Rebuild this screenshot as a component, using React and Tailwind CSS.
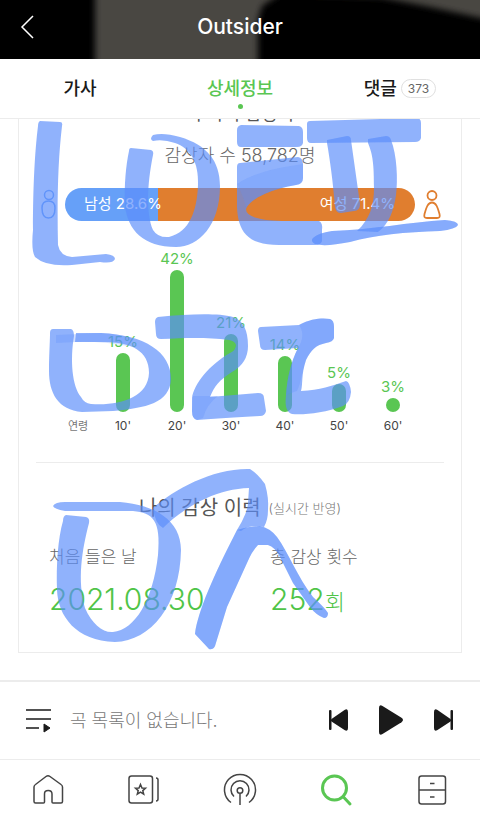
import React from "react";

const AGES = [
	{ age: "10'", percent: 15, height: 59 },
	{ age: "20'", percent: 42, height: 142 },
	{ age: "30'", percent: 21, height: 78 },
	{ age: "40'", percent: 14, height: 56 },
	{ age: "50'", percent: 5, height: 28 },
	{ age: "60'", percent: 3, height: 14 }
];

const Header = () =>
	<header className="relative flex h-[59px] items-center justify-between overflow-hidden bg-black px-5 pb-[5px]">
		<svg
			className="absolute inset-0 h-full w-full"
			viewBox="0 0 480 59"
			preserveAspectRatio="none"
			aria-hidden="true">
			<defs>
				<filter id="soft" x="-20%" y="-50%" width="140%" height="200%">
					<feGaussianBlur stdDeviation="3" />
				</filter>
			</defs>
			<g fill="#484742" filter="url(#soft)">
				<path d="M95 -20H300L262 6L258 20V80H95Z" />
				<path d="M300 -20H500V22L430 7L380 -3L300 -6Z" />
			</g>
		</svg>
		<button type="button" aria-label="뒤로" className="relative w-6 text-white">
			<svg width="14" height="24" viewBox="0 0 14 24" fill="none" stroke="currentColor" strokeWidth="1.5">
				<path d="M13 1L2 12L13 23" />
			</svg>
		</button>
		<h1 className="relative text-[21px] leading-7 font-medium text-white">Outsider</h1>
		<span className="w-6" />
	</header>;

const Tabs = () =>
	<nav className="flex h-[60px] border-b border-[#ececec] bg-white text-lg font-medium text-[#1a1a1a]">
		<a href="#lyrics" className="flex flex-1 items-center justify-center">
			가사
		</a>
		<a href="#detail" className="relative flex flex-1 items-center justify-center text-[#5ac653]">
			상세정보
			<span className="absolute bottom-[9px] h-[5px] w-[5px] rounded-full bg-[#5ac653]" />
		</a>
		<a href="#comments" className="flex flex-1 items-center justify-center gap-1">
			댓글
			<span className="rounded-full border border-[#e0e0e0] px-[6px] text-xs leading-[17px] font-normal text-[#666]">
				373
			</span>
		</a>
	</nav>;

const GenderRatio = () =>
	<div className="mt-[18px] flex items-center gap-2 px-5">
		<svg className="h-8 w-[18px] shrink-0" viewBox="0 0 18 32" fill="none" stroke="#6da2f8" strokeWidth="1.5">
			<circle cx="10" cy="6" r="4.5" />
			<path d="M9.500 12C5 12 3 15 3 19C3 25 5 29 9.500 29S16 25 16 19C16 15 14 12 9.500 12Z" />
		</svg>
		<div className="flex h-[33px] flex-1 overflow-hidden rounded-full text-[15px] text-white">
			<div className="flex w-[93px] items-center bg-[#66a0f8] pl-[19px] whitespace-nowrap">
				<span className="relative">남성 28.6%</span>
			</div>
			<div className="flex flex-1 items-center justify-end bg-[#e07e2f] pr-5">여성 71.4%</div>
		</div>
		<svg className="h-8 w-[18px] shrink-0" viewBox="0 0 18 32" fill="none" stroke="#e07e2f" strokeWidth="1.8">
			<circle cx="9" cy="6.500" r="4.500" />
			<path d="M9 13.500C5 13.500 3.500 18 1.500 25C.8 28 1.500 29 4 29H14C16.500 29 17.200 28 16.500 25C14.500 18 13 13.500 9 13.500Z" />
		</svg>
	</div>;

const AgeChart = () =>
	<div className="mt-[30px] flex items-end px-[41px]">
		<span className="w-9 text-center text-[11px] leading-5 text-[#777]">연령</span>
		{AGES.map(item =>
			<div key={item.age} className="flex flex-1 flex-col items-center">
				<span className="mb-[3px] text-[15px] leading-4 text-[#5ac653]">
					{item.percent}%
				</span>
				<span className="w-[14px] rounded-full bg-[#5ac653]" style={{ height: item.height }} />
				<span className="mt-1 text-xs leading-5 text-[#444]">
					{item.age}
				</span>
			</div>
		)}
	</div>;

const History = () =>
	<section className="mt-[26px]">
		<hr className="mx-[17px] border-[#ececec]" />
		<h2 className="mt-[31px] flex items-center justify-center gap-2 text-xl leading-7 font-normal text-[#555]">
			나의 감상 이력
			<small className="text-[13px] font-light text-[#777]">(실시간 반영)</small>
		</h2>
		<dl className="mt-[23px] grid grid-cols-2 text-[#666]">
			<div className="pl-[30px]">
				<dt className="text-[17px] leading-6 font-light">처음 들은 날</dt>
				<dd className="mt-3 text-[30px] leading-9 font-light text-[#4fc448]">2021.08.30</dd>
			</div>
			<div className="pl-[30px]">
				<dt className="text-[17px] leading-6 font-light">총 감상 횟수</dt>
				<dd className="mt-3 text-[30px] leading-9 font-light text-[#4fc448]">
					252<span className="text-[22px]">회</span>
				</dd>
			</div>
		</dl>
	</section>;

const Scribble = () =>
	<svg
		className="pointer-events-none absolute inset-0 h-full w-full"
		viewBox="0 119 480 561"
		aria-hidden="true">
		<defs>
			<filter id="edge" x="-5%" y="-5%" width="110%" height="110%" colorInterpolationFilters="sRGB">
				<feGaussianBlur stdDeviation="0.7" />
			</filter>
		</defs>
		<g fill="#5b8dfa" fillOpacity="0.68" filter="url(#edge)">
			<path d="M40 121L60 122Q63 122 62 126C58 160 57 200 58 245Q60 256 72 257L106 254Q115 255 115 259Q113 264 100 262L72 265Q46 267 35 257Q31 250 33 230C33 185 35 150 38 126Q38 122 40 121Z" />
			<path d="M131 148L151 150Q154 151 153 155C147 185 146 213 153 230Q158 238 169 237C190 232 197 210 198 185C199 162 190 148 175 143Q163 139 153 141Q149 139 153 135Q163 132 180 137C207 145 220 161 220 186C220 225 199 247 176 247C143 247 128 230 125 206C124 185 126 165 129 151Q129 148 131 148Z" />
			<path d="M241 125L299 126Q303 127 303 132V143Q302 147 297 147H241Q237 147 237 142V130Q237 126 241 125Z" />
			<path d="M240 163L298 157Q303 158 303 164V178Q303 184 296 185C275 188 250 198 246 209Q246 220 282 221L319 221Q323 223 322 230V241Q321 245 315 245H282C247 246 238 231 237 207V167Q237 163 240 163Z" />
			<path d="M237 184Q257 170 303 164V178Q303 184 296 185C275 188 250 198 246 209Q245 199 237 184Z" opacity=".35" />
			<path d="M310 121L416 118Q421 118 421 123V138Q420 142 415 142L311 143Q307 143 307 138V124Q307 121 310 121Z" />
			<path d="M327 140L347 136Q351 136 351 140L360 204Q360 211 354 211L341 213Q336 213 335 207C333 182 330 160 327 143Z" />
			<path d="M368 139L386 136Q390 136 391 140C397 155 398 180 396 195C394 210 389 224 378 232L357 231C370 219 374 205 374 188C374 165 373 155 368 143Z" />
			<path d="M313 238Q318 233 332 231C370 230 410 222 445 220Q458 221 458 225Q456 229 440 231C405 232 375 235 350 242Q325 247 315 244Q310 241 313 238Z" />
			<path d="M313 238Q318 233 332 231C370 230 410 222 445 220Q458 221 458 225Q456 229 440 231C405 232 375 235 350 242Q325 247 315 244Q310 241 313 238Z" opacity=".3" />
			<path d="M53 329L71 329Q74 330 74 336C70 360 72 386 81 397Q84 403 91 404C119 406 148 398 149 373C149 350 130 343 108 342L75 342L76 333L101 333C145 335 171 352 171 379C170 403 146 408 113 411L82 412C58 410 49 393 49 371C49 355 50 342 50 333Q50 329 53 329Z" />
			<path d="M56 335L101 333Q120 334 134 339L128 346Q100 341 76 342L56 343Z" opacity=".4" />
			<path d="M158 317C190 314 217 313 233 317Q248 322 248 346Q248 363 232 372C219 380 214 387 210 397L258 393Q264 393 264 398L266 411Q265 416 260 416C235 417 215 419 197 420Q192 419 192 411V398C194 384 209 365 230 353Q236 350 236 345Q235 341 229 340C206 337 185 338 161 339Q156 339 156 334L155 322Q155 318 158 317Z" />
			<path d="M193 396H218Q207 404 203 418L197 420Q192 419 192 411Z" opacity=".4" />
			<path d="M261 327L299 325C312 318 323 318 330 319Q334 320 334 327V338Q333 342 326 343C316 345 311 350 306 360C301 375 303 385 301 391C320 390 332 386 346 381Q350 382 351 392Q350 403 343 406C325 413 304 415 292 414Q284 412 286 395C287 378 291 362 298 348L265 350Q260 350 260 345L258 331Q258 327 261 327Z" />
			<path d="M299 325C312 318 323 318 330 319Q334 320 334 327V338Q333 342 326 343C316 345 311 350 306 360C301 375 302 380 297 391L286 395C287 378 291 362 298 348Q306 335 299 325Z" opacity=".4" />
			<path d="M66 515L86 517Q90 518 89 523C82 550 77 580 85 608C92 624 103 633 113 632C135 630 153 600 158 555C161 520 153 513 133 511Q110 511 65 511Q54 509 53 506Q55 502 65 502Q100 502 120 502C155 505 181 520 181 550C180 605 151 641 115 642C76 641 58 616 57 590C56 565 58 538 63 521Q63 516 66 515Z" />
			<path d="M153 508C175 489 213 468 250 469Q258 474 265 484Q269 498 268 510Q268 520 264 527Q250 524 241 531L237 530Q248 512 248 503L249 488C220 489 190 502 163 528Q155 524 153 508Z" />
			<path d="M237 530Q250 526 260 526Q270 528 277 537C288 552 298 578 313 597Q325 608 328 613Q328 618 324 618Q316 615 310 607L293 583L280 557Q275 547 268 545H258Q252 551 247 563L227 607L215 646Q213 650 209 649L195 634C198 611 213 577 237 530Z" />
			<path d="M237 530Q250 526 260 526Q270 528 277 537C288 552 298 578 313 597Q325 608 328 613Q328 618 324 618Q316 615 310 607L293 583L280 557Q275 547 268 545H258Q252 551 247 563L227 607L215 646Q213 650 209 649L195 634C198 611 213 577 237 530Z" opacity=".35" />
		</g>
	</svg>;

const Player = () =>
	<div className="flex h-[79px] items-center border-t-2 border-[#ececec] pr-[26px] pl-[25px]">
		<button type="button" aria-label="재생 목록">
			<svg width="27" height="24" viewBox="0 0 27 24" stroke="#1a1a1a" strokeWidth="1.7" fill="none">
				<path d="M1 1H26M1 10H26M1 19H14" />
				<path d="M19 15L25 19L19 23Z" fill="#1a1a1a" stroke="#1a1a1a" strokeWidth="1" />
			</svg>
		</button>
		<p className="flex-1 pl-[18px] text-lg font-light text-[#777]">곡 목록이 없습니다.</p>
		<div className="flex items-center gap-[29px] pb-[2px]">
			<button type="button" aria-label="이전 곡">
				<svg width="21" height="24" viewBox="0 0 21 24" fill="#1a1a1a">
					<rect x="1" y="2" width="2.500" height="20" rx="1" />
					<path d="M3.500 11L16.500 2Q20 0 20 4V20Q20 24 16.500 22L3.500 13.500Q2 12 3.500 11Z" />
				</svg>
			</button>
			<button type="button" aria-label="재생">
				<svg width="26" height="30" viewBox="0 0 26 30" fill="#1a1a1a">
					<path d="M1 3Q1 -1 4.500 1L23.500 12.800Q26.500 15 23.500 17.200L4.500 29Q1 31 1 27Z" />
				</svg>
			</button>
			<button type="button" aria-label="다음 곡">
				<svg width="21" height="24" viewBox="0 0 21 24" fill="#1a1a1a">
					<rect x="17.500" y="2" width="2.500" height="20" rx="1" />
					<path d="M17.500 11L4.500 2Q1 0 1 4V20Q1 24 4.500 22L17.500 13.500Q19 12 17.500 11Z" />
				</svg>
			</button>
		</div>
	</div>;

const NAV_ITEMS = [
	{
		label: "홈",
		icon: <path d="M3 13Q3 11.500 4.500 10.500L15 2.500Q17 1 19 2.500L30 10.500Q31.500 11.500 31.500 13V27.500Q31.500 29 30 29H22Q21 29 21 28V20Q21 16.500 17.200 16.500T13.500 20V28Q13.500 29 12.500 29H4.500Q3 29 3 27.500Z" />
	},
	{
		label: "스테이션",
		icon: (
			<g>
				<rect x="2" y="2" width="23.500" height="27" rx="2.500" />
				<path d="M29 4Q31 4 31 6V25Q31 27 29 27" />
				<path d="M13.500 10.500L15 14L18.500 14.200L15.800 16.600L16.700 20.200L13.500 18.200L10.300 20.200L11.200 16.600L8.500 14.200L12 14Z" />
			</g>
		)
	},
	{
		label: "라디오",
		icon: (
			<g>
				<path d="M8 28.500A15.500 15.500 0 1 1 26 28.500" />
				<path d="M11 22.500A9 9 0 1 1 23 22.500" />
				<circle cx="17" cy="16.500" r="2.800" />
				<path d="M17 19.500V31" />
			</g>
		)
	},
	{
		label: "검색",
		active: true,
		icon: (
			<g strokeWidth="3">
				<circle cx="15.500" cy="14" r="12" />
				<path d="M24 22.500L31 30" strokeLinecap="round" />
			</g>
		)
	},
	{
		label: "보관함",
		icon: (
			<g>
				<rect x="4" y="2" width="26.500" height="28" rx="2.500" />
				<path d="M4 16H30.500M15 9.500H19.500M15 23H19.500" />
			</g>
		)
	}
];

const BottomNav = () =>
	<nav className="flex h-16 border-t border-[#ececec] pt-[14px]">
		{NAV_ITEMS.map(item =>
			<a key={item.label} href="#menu" aria-label={item.label} className="flex flex-1 justify-center">
				<svg
					width="34"
					height="34"
					viewBox="0 0 34 34"
					fill="none"
					stroke={item.active ? "#5ac653" : "#444"}
					strokeWidth="1.500"
					className="overflow-visible">
					{item.icon}
				</svg>
			</a>
		)}
	</nav>;

const App = () =>
	<div className="min-h-screen bg-white font-['Inter','Noto_Sans_CJK_KR',sans-serif]">
		<Header />
		<Tabs />
		<main className="relative overflow-hidden pb-[27px]">
			<section className="mx-[18px] border-x border-b border-[#ececec] pb-[32px]">
				<h2 className="-mt-[17px] text-center text-lg leading-6 text-[#555]">이 곡의 감상자</h2>
				<p className="mt-[16px] text-center text-lg leading-7 font-light text-[#666]">감상자 수 58,782명</p>
				<GenderRatio />
				<AgeChart />
				<History />
			</section>
			<Scribble />
		</main>
		<Player />
		<BottomNav />
	</div>;

export default App;
